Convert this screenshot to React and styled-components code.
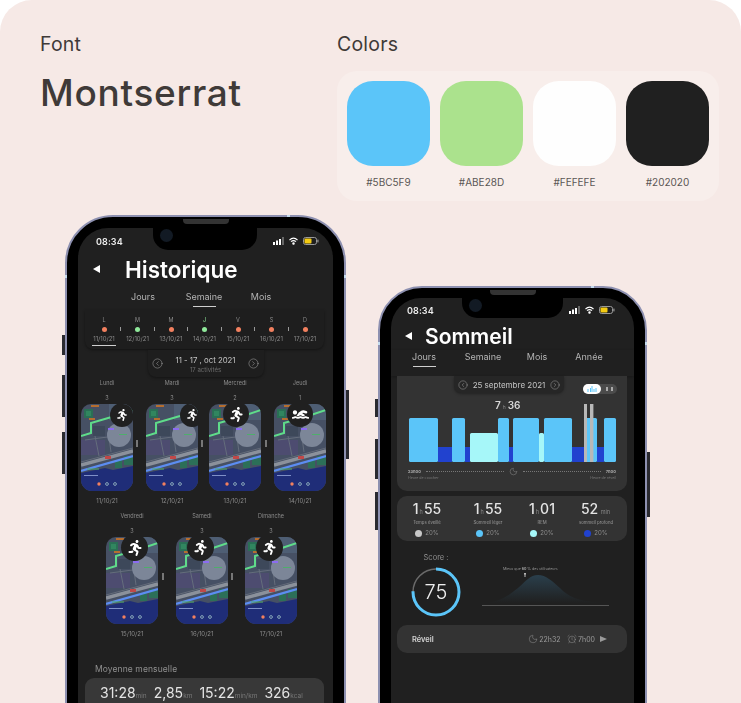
import React from 'react';
import styled, { createGlobalStyle } from 'styled-components';
import { FaRunning, FaSwimmer } from 'react-icons/fa';
import { CircleChevronLeft, CircleChevronRight, Moon, AlarmClock } from 'lucide-react';

const Global = createGlobalStyle`
  html, body { margin: 0; padding: 0; background: #fff; }
  * { box-sizing: border-box; }
`;

const weekDays = [
  { l: 'L', c: '#f2805f', d: '11/10/21' },
  { l: 'M', c: '#8fe89a', d: '12/10/21' },
  { l: 'M', c: '#f2805f', d: '13/10/21' },
  { l: 'J', c: '#8fe89a', d: '14/10/21' },
  { l: 'V', c: '#f2805f', d: '15/10/21' },
  { l: 'S', c: '#f2805f', d: '16/10/21' },
  { l: 'D', c: '#f2805f', d: '17/10/21' },
];

const swatches = ['#5BC5F9', '#ABE28D', '#FEFEFE', '#202020'];

const hypno = [
  [12, 29, 't'], [41, 14, 's'], [55, 13, 't'], [68, 5, 's'], [73, 28, 'm'], [101, 11, 't'],
  [112, 4, 's'], [116, 26, 't'], [142, 5, 'm'], [147, 28, 't'], [175, 12, 's'], [187, 13, 't'],
  [200, 7, 's'], [207, 12, 't'],
];
const hypnoLevels = {
  t: { y: 24, fill: '#5bc5f9' },
  m: { y: 39, fill: '#a6f7f9' },
  s: { y: 53, fill: '#2142cf' },
};

const StatusIcons = () => (
  <StatusGroup>
    <svg width="11" height="8" viewBox="0 0 11 8">
      <rect x="0" y="5" width="2" height="3" fill="#fff" />
      <rect x="3" y="3.5" width="2" height="4.5" fill="#fff" />
      <rect x="6" y="2" width="2" height="6" fill="#fff" />
      <rect x="9" y="0" width="2" height="8" fill="#666" />
    </svg>
    <svg width="9" height="8" viewBox="0 0 9 8" fill="none" stroke="#fff" strokeWidth="1.1">
      <path d="M.5 3C3 .7 6 .7 8.5 3" />
      <path d="M2 4.7c1.5-1.3 3.5-1.3 5 0" />
      <circle cx="4.5" cy="6.6" r=".7" fill="#fff" />
    </svg>
    <svg width="16" height="8" viewBox="0 0 16 8">
      <rect x=".5" y=".5" width="13" height="7" rx="2" fill="none" stroke="#999" />
      <rect x="1.5" y="1.5" width="7" height="5" rx="1" fill="#f4cb12" />
      <rect x="14.3" y="2.6" width="1.2" height="2.8" fill="#999" />
    </svg>
  </StatusGroup>
);

const MapArt = () => (
  <MapSvg viewBox="0 0 52 87" preserveAspectRatio="none">
    <rect width="52" height="87" fill="#465064" />
    <rect x="0" y="36" width="24" height="15" fill="#4d4c70" />
    <rect x="28" y="0" width="24" height="16" fill="#4e5e74" />
    <rect x="12" y="22" width="12" height="10" fill="#3d485a" />
    <rect x="3" y="5" width="9" height="9" fill="#2a6f55" />
    <rect x="5" y="7" width="5" height="5" fill="#359064" opacity=".7" />
    <rect x="10" y="1" width="8" height="2" fill="#b56e30" />
    <rect x="8" y="14" width="6" height="2" fill="#b56e30" />
    <path d="M14 32 L18 52 M28 34 L30 48 M4 36 L34 32" stroke="#646d7c" strokeWidth="1" fill="none" />
    <circle cx="38" cy="31" r="12" fill="#7c8698" />
    <rect x="27" y="24" width="6" height="2" fill="#8b6cf0" />
    <rect x="38" y="30" width="8" height="1" fill="#4fae6c" />
    <path d="M0 61 L52 47" stroke="#8b919b" strokeWidth="3.4" fill="none" />
    <path d="M0 58 L52 44" stroke="#656c7a" strokeWidth="1" fill="none" />
    <path d="M0 32 L10 29 L10 19 L34 12 L52 6" stroke="#5fdc8a" strokeWidth="2" fill="none" />
    <rect x="34" y="56" width="7" height="8" fill="#2c6f58" />
    <rect x="43" y="52" width="9" height="9" fill="#2c6f58" />
    <rect x="24" y="52" width="6" height="3" fill="#c04848" />
    <polygon points="0,69 24,64 32,66 52,62 52,87 0,87" fill="#1f2d78" />
    <path d="M0 67 L52 52" stroke="#5c8df2" strokeWidth="2.2" fill="none" />
    <rect x="3" y="71" width="14" height="1" fill="#7f90c8" />
    <rect x="6" y="64.5" width="12" height="1" fill="#4fae6c" />
    <circle cx="18" cy="80" r="1.7" fill="#f2805f" />
    <circle cx="26" cy="80" r="1.4" fill="none" stroke="#9fc2c8" strokeWidth=".8" />
    <circle cx="34" cy="80" r="1.4" fill="none" stroke="#9fc2c8" strokeWidth=".8" />
  </MapSvg>
);

const DayCol = ({ label, count, date, right, size, iconSize, top, swim }) => (
  <DayColumn>
    <DayName>{label}</DayName>
    <DayCount>{count}</DayCount>
    <Thumb>
      <MapArt />
      <IconDisc $right={right} $size={size} $top={top}>
        {swim ? <FaSwimmer size={iconSize} color="#fff" /> : <FaRunning size={iconSize} color="#fff" />}
      </IconDisc>
    </Thumb>
    <DayDate>{date}</DayDate>
  </DayColumn>
);

const Stat = ({ a, unit, b, label, color }) => (
  <StatCol>
    <StatValue>
      {a}
      <StatUnit>{unit}</StatUnit>
      {b}
    </StatValue>
    <StatLabel>{label}</StatLabel>
    <PctRow>
      <PctDot $color={color} />
      20%
    </PctRow>
  </StatCol>
);

const Frame = ({ $second, children }) => (
  <Phone $second={$second}>
    <Speaker $second={$second} />
    <BandTop $left={$second ? 211 : 220} />
    <BandSide $side="left" $top={$second ? 54 : 58} />
    <BandSide $side="right" $top={$second ? 54 : 58} />
    {($second
      ? [['left', 111, 18], ['left', 151, 40], ['left', 204, 38], ['right', 164, 65]]
      : [['left', 118, 20], ['left', 158, 42], ['left', 215, 42], ['right', 173, 69]]
    ).map(([side, top, h], i) => (
      <SideButton key={i} $side={side} $top={top} $h={h} />
    ))}
    <Screen>
      <Notch $second={$second}>
        <Camera />
      </Notch>
      {children}
    </Screen>
  </Phone>
);

export default function App() {
  return (
    <>
      <Global />
      <Board>
        <TopRow>
          <FontCol>
            <SectionLabel>Font</SectionLabel>
            <FontName>Montserrat</FontName>
          </FontCol>
          <div>
            <SectionLabel>Colors</SectionLabel>
            <Palette>
              {swatches.map((c) => (
                <SwatchCol key={c}>
                  <Swatch $color={c} />
                  <SwatchName>{c}</SwatchName>
                </SwatchCol>
              ))}
            </Palette>
          </div>
        </TopRow>

        <PhoneRow>
          <Frame>
            <StatusBar $left={18} $right={14} $h={26}>
              <Clock>08:34</Clock>
              <StatusIcons />
            </StatusBar>
            <TitleRow $h={30} $left={15} $gap={25}>
              <BackArrow />
              <Title $size={22.5}>Historique</Title>
            </TitleRow>
            <TabsOne>
              <Tab>Jours<Underline /></Tab>
              <Tab>Semaine<Underline $on /></Tab>
              <Tab>Mois<Underline /></Tab>
            </TabsOne>
            <WeekCard>
              {weekDays.map((d, i) => (
                <React.Fragment key={d.d}>
                  <WeekDay>
                    <WeekLetter $color={d.l === 'J' ? '#8fe89a' : '#8a8a8a'}>{d.l}</WeekLetter>
                    <WeekDot $color={d.c} />
                    <WeekDate>{d.d}</WeekDate>
                    <WeekMark $on={i === 0} />
                  </WeekDay>
                  {i < 6 && <WeekTick />}
                </React.Fragment>
              ))}
            </WeekCard>
            <RangePill>
              <CircleChevronLeft size={11} strokeWidth={1} color="#bbb" />
              <RangeText>
                <RangeMain>11 - 17 , oct 2021</RangeMain>
                <RangeSub>17 activités</RangeSub>
              </RangeText>
              <CircleChevronRight size={11} strokeWidth={1} color="#bbb" />
            </RangePill>
            <ThumbRow $left={3}>
              <DayCol label="Lundi" count="3" date="11/10/21" right={-1} size={24} top={-1} iconSize={12} />
              <Sep $l={3} $r={8} />
              <DayCol label="Mardi" count="3" date="12/10/21" right={-6} size={24} top={-1} iconSize={12} />
              <Sep $l={3} $r={6} />
              <DayCol label="Mercredi" count="2" date="13/10/21" right={12} size={26} top={-3} iconSize={15} />
              <Sep $l={4} $r={7} />
              <DayCol label="Jeudi" count="1" date="14/10/21" right={13} size={26} top={-3} iconSize={17} swim />
            </ThumbRow>
            <ThumbRow $left={28} $top={3}>
              <DayCol label="Vendredi" count="3" date="15/10/21" right={10} size={27} top={-3} iconSize={16} />
              <Sep $l={4} $r={12} />
              <DayCol label="Samedi" count="3" date="16/10/21" right={14} size={27} top={-3} iconSize={15} />
              <Sep $l={3} $r={12} />
              <DayCol label="Dimanche" count="3" date="17/10/21" right={14} size={27} top={-3} iconSize={15} />
            </ThumbRow>
            <MonthLabel>Moyenne mensuelle</MonthLabel>
            <MonthCard>
              <MonthValue>31:28<small>min</small></MonthValue>
              <MonthValue>2,85<small>km</small></MonthValue>
              <MonthValue>15:22<small>min/km</small></MonthValue>
              <MonthValue>326<small>kcal</small></MonthValue>
            </MonthCard>
          </Frame>

          <Frame $second>
            <StatusBar $left={16} $right={19} $h={24}>
              <Clock>08:34</Clock>
              <StatusIcons />
            </StatusBar>
            <TitleRow $h={28} $left={14} $gap={13}>
              <BackArrow />
              <Title $size={21}>Sommeil</Title>
            </TitleRow>
            <TabsTwo>
              <Tab>Jours<Underline $on /></Tab>
              <Tab>Semaine<Underline /></Tab>
              <Tab>Mois<Underline /></Tab>
              <Tab>Année<Underline /></Tab>
            </TabsTwo>
            <ChartCard>
              <ChartTop>
                <DatePill>
                  <CircleChevronLeft size={10} strokeWidth={1} color="#bbb" />
                  <span>25 septembre 2021</span>
                  <CircleChevronRight size={10} strokeWidth={1} color="#bbb" />
                </DatePill>
                <Toggle>
                  <ToggleOn>
                    <svg width="10" height="6" viewBox="0 0 10 6">
                      <path d="M1 6V3M3.5 6V2M5 6V0M7 6V3M9 6V2" stroke="#5bc5f9" strokeWidth="1" />
                    </svg>
                  </ToggleOn>
                  <ToggleOff>
                    <i /><i />
                  </ToggleOff>
                </Toggle>
              </ChartTop>
              <ChartArea>
                <TotalSleep>7<small>h</small>36</TotalSleep>
                <svg width="230" height="68" viewBox="0 0 230 68" style={{ display: 'block' }}>
                  {hypno.map(([x, w, k]) => (
                    <rect key={x} x={x} y={hypnoLevels[k].y} width={w} height={68 - hypnoLevels[k].y} fill={hypnoLevels[k].fill} rx={k === 's' ? 0 : 1.5} />
                  ))}
                  <rect x="187" y="10" width="3" height="58" fill="#b8b8b8" />
                  <rect x="193" y="10" width="3.4" height="58" fill="#b8b8b8" />
                </svg>
              </ChartArea>
              <AxisRow>
                <AxisTime>23h00</AxisTime>
                <AxisDots />
                <Moon size={9} strokeWidth={1} color="#aaa" />
                <AxisDots />
                <AxisTime>7h00</AxisTime>
              </AxisRow>
              <AxisCaptions>
                <span>Heure de coucher</span>
                <span>Heure de réveil</span>
              </AxisCaptions>
            </ChartCard>

            <StatsCard>
              <Stat a="1" unit="h" b="55" label="Temps éveillé" color="#c8c8c8" />
              <Stat a="1" unit="h" b="55" label="Sommeil léger" color="#5bc5f9" />
              <Stat a="1" unit="h" b="01" label="REM" color="#a6f7f9" />
              <Stat a="52" unit=" min" b="" label="sommeil profond" color="#2142cf" />
            </StatsCard>

            <ScoreRow>
              <ScoreCol>
                <ScoreLabel>Score :</ScoreLabel>
                <Ring>
                  <svg width="50" height="50" viewBox="0 0 50 50">
                    <circle cx="25" cy="25" r="23" fill="none" stroke="#6a6a6a" strokeWidth="1.5" />
                    <circle
                      cx="25" cy="25" r="23" fill="none" stroke="#5bc5f9" strokeWidth="3"
                      strokeDasharray="108.4 144.5" transform="rotate(-90 25 25)"
                    />
                  </svg>
                  <RingValue>75</RingValue>
                </Ring>
              </ScoreCol>
              <BellCol>
                <BellLabel>Mieux que <b>60 %</b> des utilisateurs</BellLabel>
                <svg width="127" height="34" viewBox="0 0 127 34" style={{ display: 'block' }}>
                  <defs>
                    <linearGradient id="bell" x1="0" y1="0" x2="0" y2="1">
                      <stop offset="0" stopColor="#2a3f4c" />
                      <stop offset="1" stopColor="#202020" />
                    </linearGradient>
                  </defs>
                  <path d="M0 30 C18 29 26 23 36 15 C44 8 48 2 56 2 C64 2 70 8 78 15 C86 23 94 29 127 30 Z" fill="url(#bell)" />
                  <path d="M0 32.5H127" stroke="#555" strokeWidth="1" />
                  <path d="M43 0v4" stroke="#bbb" strokeWidth="1" />
                  <circle cx="43" cy="0.8" r="1" fill="#bbb" />
                </svg>
              </BellCol>
            </ScoreRow>

            <WakeCard>
              <WakeTitle>Réveil</WakeTitle>
              <WakeGroup>
                <WakeItem><Moon size={10} strokeWidth={1} color="#aaa" />22h32</WakeItem>
                <WakeItem><AlarmClock size={10} strokeWidth={1} color="#aaa" />7h00</WakeItem>
                <PlayMark />
              </WakeGroup>
            </WakeCard>
          </Frame>
        </PhoneRow>
      </Board>
    </>
  );
}

const Board = styled.div`
  width: 741px;
  height: 703px;
  overflow: hidden;
  background: #f6e9e6;
  border-radius: 32px 32px 0 0;
  font-family: Inter, 'Liberation Sans', sans-serif;
`;
const TopRow = styled.div`
  display: flex;
  height: 201px;
  padding: 34px 0 0 40px;
`;
const FontCol = styled.div`
  width: 297px;
`;
const SectionLabel = styled.div`
  font-size: 19.5px;
  line-height: 20px;
  letter-spacing: 0.2px;
  color: #3f3a38;
`;
const FontName = styled.div`
  margin-top: 19px;
  font-size: 37px;
  line-height: 40px;
  font-weight: 500;
  letter-spacing: 0.7px;
  color: #3f3a38;
`;
const Palette = styled.div`
  display: flex;
  gap: 10px;
  width: 382px;
  height: 130px;
  margin-top: 17px;
  padding: 10px;
  border-radius: 20px;
  background: #f8eeeb;
`;
const SwatchCol = styled.div`
  display: flex;
  flex-direction: column;
  align-items: center;
`;
const Swatch = styled.div`
  width: 83px;
  height: 85px;
  border-radius: 26px;
  background: ${(p) => p.$color};
`;
const SwatchName = styled.div`
  margin-top: 10px;
  font-size: 10px;
  line-height: 12px;
  color: #5a5654;
`;
const PhoneRow = styled.div`
  display: flex;
  align-items: flex-start;
  gap: 32px;
  margin-top: 14px;
  padding-left: 65px;
`;
const Phone = styled.div`
  position: relative;
  flex: none;
  display: flex;
  width: ${(p) => (p.$second ? 269 : 281)}px;
  height: 620px;
  margin-top: ${(p) => (p.$second ? 71 : 0)}px;
  padding: ${(p) => (p.$second ? 10 : 11)}px 11px 0;
  border: 2px solid #8d90b0;
  border-radius: ${(p) => (p.$second ? 44 : 48)}px;
  background: #000;
  filter: blur(0.6px);
`;
const Speaker = styled.div`
  position: absolute;
  top: 2px;
  left: 50%;
  width: 46px;
  height: 5px;
  margin-left: -23px;
  border-radius: 0 0 4px 4px;
  background: #333;
`;
const BandTop = styled.div`
  position: absolute;
  top: -2px;
  left: ${(p) => p.$left}px;
  width: 3px;
  height: 2px;
  background: #c4dcef;
`;
const BandSide = styled.div`
  position: absolute;
  ${(p) => p.$side}: -2px;
  top: ${(p) => p.$top}px;
  width: 2px;
  height: 3px;
  background: #c4dcef;
`;
const SideButton = styled.div`
  position: absolute;
  ${(p) => p.$side}: -5px;
  top: ${(p) => p.$top}px;
  width: 3px;
  height: ${(p) => p.$h}px;
  background: #2a2a30;
`;
const Screen = styled.div`
  position: relative;
  width: 100%;
  overflow: hidden;
  border-radius: 30px 30px 0 0;
  background: #202020;
  color: #fff;
`;
const Notch = styled.div`
  position: absolute;
  top: 0;
  left: ${(p) => (p.$second ? 71 : 75)}px;
  width: ${(p) => (p.$second ? 101 : 104)}px;
  height: ${(p) => (p.$second ? 20 : 22)}px;
  border-radius: 0 0 15px 15px;
  background: #000;
`;
const Camera = styled.div`
  position: absolute;
  top: 1px;
  left: 7px;
  width: 13px;
  height: 13px;
  border-radius: 50%;
  background: #121a24;
`;
const StatusBar = styled.div`
  display: flex;
  align-items: center;
  justify-content: space-between;
  height: ${(p) => p.$h}px;
  padding: 0 ${(p) => p.$right}px 0 ${(p) => p.$left}px;
`;
const Clock = styled.span`
  font-size: 9px;
  font-weight: 600;
  letter-spacing: 0.1px;
  color: #eee;
`;
const StatusGroup = styled.div`
  display: flex;
  align-items: center;
  gap: 5px;
`;
const TitleRow = styled.div`
  display: flex;
  align-items: center;
  gap: ${(p) => p.$gap}px;
  height: ${(p) => p.$h}px;
  padding-left: ${(p) => p.$left}px;
`;
const BackArrow = styled.div`
  width: 0;
  height: 0;
  border-top: 4px solid transparent;
  border-bottom: 4px solid transparent;
  border-right: 7px solid #fff;
`;
const Title = styled.div`
  font-size: ${(p) => p.$size}px;
  font-weight: 600;
  color: #fff;
`;
const TabsOne = styled.div`
  display: grid;
  grid-template-columns: 58px 64px 50px;
  height: 19px;
  margin-top: 7px;
  padding-left: 36px;
`;
const TabsTwo = styled.div`
  display: grid;
  grid-template-columns: 66px 52px 56px 48px;
  height: 26px;
  padding-top: 1px;
  box-shadow: 0 1px 3px rgba(0, 0, 0, 0.3);
`;
const Tab = styled.div`
  display: flex;
  flex-direction: column;
  align-items: center;
  gap: 3px;
  font-size: 9px;
  line-height: 12px;
  color: #b4b4b4;
`;
const Underline = styled.div`
  width: 23px;
  height: 1px;
  background: ${(p) => (p.$on ? '#cfcfcf' : 'transparent')};
`;
const WeekCard = styled.div`
  display: flex;
  width: 239px;
  height: 39px;
  margin: 0 7px;
  padding: 6px 0 0 4px;
  border-radius: 0 0 8px 8px;
  background: #1e1e1e;
  box-shadow: 0 1px 3px rgba(0, 0, 0, 0.4);
`;
const WeekDay = styled.div`
  display: flex;
  flex-direction: column;
  align-items: center;
  width: 30px;
`;
const WeekLetter = styled.div`
  font-size: 5.5px;
  line-height: 8px;
  color: ${(p) => p.$color};
`;
const WeekDot = styled.div`
  width: 5px;
  height: 5px;
  margin-top: 3px;
  border-radius: 50%;
  background: ${(p) => p.$color};
`;
const WeekDate = styled.div`
  margin-top: 3px;
  font-size: 6px;
  line-height: 8px;
  white-space: nowrap;
  color: #8a8a8a;
`;
const WeekMark = styled.div`
  width: 24px;
  height: 1px;
  margin-top: 2px;
  background: ${(p) => (p.$on ? '#cfcfcf' : 'transparent')};
`;
const WeekTick = styled.div`
  width: 1px;
  height: 4px;
  margin: 11px 1.25px 0;
  background: #999;
`;
const RangePill = styled.div`
  display: flex;
  align-items: center;
  justify-content: space-between;
  width: 116px;
  height: 27px;
  margin: 1px auto 0;
  padding: 0 4px;
  border-radius: 0 0 8px 8px;
  background: #1e1e1e;
  box-shadow: 0 1px 3px rgba(0, 0, 0, 0.4);
`;
const RangeText = styled.div`
  display: flex;
  flex-direction: column;
  align-items: center;
`;
const RangeMain = styled.div`
  font-size: 7.8px;
  line-height: 12px;
  color: #c4c4c4;
`;
const RangeSub = styled.div`
  font-size: 6px;
  line-height: 8px;
  color: #6e6e6e;
`;
const ThumbRow = styled.div`
  display: flex;
  align-items: flex-start;
  margin-top: ${(p) => p.$top || 0}px;
  padding-left: ${(p) => p.$left}px;
`;
const DayColumn = styled.div`
  display: flex;
  flex-direction: column;
  align-items: center;
  flex: none;
  width: 52px;
`;
const DayName = styled.div`
  height: 12px;
  font-size: 5.5px;
  line-height: 12px;
  white-space: nowrap;
  color: #8a8a8a;
`;
const DayCount = styled.div`
  height: 12px;
  margin-top: 3px;
  font-size: 5.5px;
  line-height: 12px;
  color: #8a8a8a;
`;
const Thumb = styled.div`
  position: relative;
  width: 52px;
  height: 87px;
  overflow: hidden;
  border-radius: 10px 10px 11px 11px;
`;
const MapSvg = styled.svg`
  display: block;
  width: 52px;
  height: 87px;
`;
const IconDisc = styled.div`
  position: absolute;
  top: ${(p) => p.$top}px;
  right: ${(p) => p.$right}px;
  display: flex;
  align-items: center;
  justify-content: center;
  width: ${(p) => p.$size}px;
  height: ${(p) => p.$size}px;
  border-radius: 50%;
  background: #202020;
`;
const DayDate = styled.div`
  height: 12px;
  margin-top: 4px;
  font-size: 6px;
  line-height: 12px;
  color: #8a8a8a;
`;
const Sep = styled.div`
  flex: none;
  width: 2px;
  height: 7px;
  margin: 63px ${(p) => p.$r}px 0 ${(p) => p.$l}px;
  background: #777;
`;
const MonthLabel = styled.div`
  margin: 23px 0 0 17px;
  font-size: 8.5px;
  line-height: 12px;
  letter-spacing: 0.1px;
  color: #8f8f8f;
`;
const MonthCard = styled.div`
  display: flex;
  gap: 7px;
  width: 239px;
  height: 46px;
  margin: 3px 7px 0;
  padding: 4px 0 0 15px;
  border-radius: 9px;
  background: #383838;
`;
const MonthValue = styled.div`
  font-size: 14px;
  line-height: 22px;
  white-space: nowrap;
  color: #e4e4e4;
  small {
    font-size: 6.5px;
    color: #777;
  }
`;
const ChartCard = styled.div`
  width: 230px;
  height: 115px;
  margin-left: 6px;
  border-radius: 0 0 10px 10px;
  background: #333;
`;
const ChartTop = styled.div`
  display: flex;
  align-items: flex-start;
  height: 18px;
  padding-left: 57px;
`;
const DatePill = styled.div`
  display: flex;
  align-items: center;
  justify-content: space-between;
  flex: none;
  width: 110px;
  height: 17px;
  padding: 0 4px;
  border-radius: 0 0 7px 7px;
  background: #262626;
  box-shadow: 0 1px 3px rgba(0, 0, 0, 0.35);
  font-size: 8px;
  white-space: nowrap;
  color: #c4c4c4;
`;
const Toggle = styled.div`
  display: flex;
  width: 34px;
  height: 10px;
  margin: 8px 0 0 19px;
  border-radius: 5px;
  background: #4b4b4b;
`;
const ToggleOn = styled.div`
  display: flex;
  align-items: center;
  justify-content: center;
  width: 18px;
  height: 10px;
  border-radius: 5px;
  background: #fff;
`;
const ToggleOff = styled.div`
  display: flex;
  align-items: center;
  justify-content: center;
  gap: 3px;
  flex: 1;
  i {
    display: block;
    width: 2px;
    height: 4px;
    background: #aaa;
  }
`;
const ChartArea = styled.div`
  position: relative;
  height: 68px;
`;
const TotalSleep = styled.div`
  position: absolute;
  top: 4px;
  left: 98px;
  width: 24px;
  font-size: 10px;
  line-height: 14px;
  font-weight: 600;
  white-space: nowrap;
  color: #d8d8d8;
  small {
    margin: 0 2px;
    font-size: 5px;
    font-weight: 400;
    color: #888;
  }
`;
const AxisRow = styled.div`
  display: flex;
  align-items: center;
  gap: 5px;
  height: 9px;
  margin-top: 5px;
  padding: 0 11px;
`;
const AxisTime = styled.span`
  font-size: 4px;
  font-weight: 700;
  color: #aaa;
`;
const AxisDots = styled.div`
  flex: 1;
  border-top: 1px dotted #777;
`;
const AxisCaptions = styled.div`
  display: flex;
  justify-content: space-between;
  padding: 0 11px;
  font-size: 3.6px;
  line-height: 5px;
  color: #7a7a7a;
`;
const StatsCard = styled.div`
  display: grid;
  grid-template-columns: 60px 62px 46px 62px;
  width: 230px;
  height: 45px;
  margin: 5px 0 0 6px;
  padding-top: 5px;
  border-radius: 10px;
  background: #333;
`;
const StatCol = styled.div`
  display: flex;
  flex-direction: column;
  align-items: center;
`;
const StatValue = styled.div`
  font-size: 14px;
  line-height: 16px;
  font-weight: 500;
  white-space: nowrap;
  color: #e4e4e4;
`;
const StatUnit = styled.span`
  margin: 0 1px;
  font-size: 5.5px;
  font-weight: 400;
  color: #888;
`;
const StatLabel = styled.div`
  font-size: 4.3px;
  line-height: 6px;
  white-space: nowrap;
  color: #9a9a9a;
`;
const PctRow = styled.div`
  display: flex;
  align-items: center;
  gap: 3px;
  margin-top: 3px;
  font-size: 6px;
  line-height: 8px;
  color: #8c8c8c;
`;
const PctDot = styled.div`
  width: 7px;
  height: 7px;
  border-radius: 50%;
  background: ${(p) => p.$color};
`;
const ScoreRow = styled.div`
  display: flex;
  align-items: flex-start;
  gap: 21px;
  padding: 11px 0 0 20px;
`;
const ScoreCol = styled.div`
  display: flex;
  flex-direction: column;
  align-items: center;
  width: 50px;
`;
const ScoreLabel = styled.div`
  height: 15px;
  font-size: 7.5px;
  line-height: 12px;
  white-space: nowrap;
  color: #8f8f8f;
`;
const Ring = styled.div`
  position: relative;
  width: 50px;
  height: 50px;
  svg {
    display: block;
  }
`;
const RingValue = styled.div`
  position: absolute;
  inset: 0;
  display: flex;
  align-items: center;
  justify-content: center;
  font-size: 20px;
  font-weight: 300;
  color: #eee;
`;
const BellCol = styled.div`
  display: flex;
  flex-direction: column;
  width: 127px;
  margin-top: 13px;
`;
const BellLabel = styled.div`
  height: 8px;
  padding-left: 21px;
  font-size: 3.6px;
  line-height: 8px;
  white-space: nowrap;
  color: #999;
`;
const WakeCard = styled.div`
  display: flex;
  align-items: center;
  justify-content: space-between;
  width: 230px;
  height: 28px;
  margin: 8px 0 0 6px;
  padding: 0 20px 0 15px;
  border-radius: 10px;
  background: #333;
`;
const WakeTitle = styled.div`
  font-size: 7.5px;
  font-weight: 600;
  color: #d4d4d4;
`;
const WakeGroup = styled.div`
  display: flex;
  align-items: center;
  gap: 6px;
`;
const WakeItem = styled.div`
  display: flex;
  align-items: center;
  gap: 1.5px;
  font-size: 7px;
  color: #9a9a9a;
`;
const PlayMark = styled.div`
  width: 0;
  height: 0;
  margin-left: -1px;
  border-top: 3.5px solid transparent;
  border-bottom: 3.5px solid transparent;
  border-left: 7px solid #9a9a9a;
`;
